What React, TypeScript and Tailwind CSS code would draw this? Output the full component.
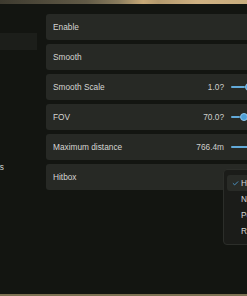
import { Check } from "lucide-react";

const font = { fontFamily: '"Liberation Sans", Arial, sans-serif' };

type Row = { label: string; value?: string; fill?: number };

const ROWS: Row[] = [
  { label: "Enable" },
  { label: "Smooth" },
  { label: "Smooth Scale", value: "1.0?", fill: 14 },
  { label: "FOV", value: "70.0?", fill: 9 },
  { label: "Maximum distance", value: "766.4m", fill: 24 },
];

function Slider({ fill }: { fill: number }) {
  return (
    <div className="relative flex h-[8px] w-[38px] items-center">
      <div className="h-[2px] w-full rounded-full bg-[#2e302c]" />
      <div className="absolute left-0 h-[2px] rounded-full bg-[#62a9d8]" style={{ width: fill }} />
      <div
        className="absolute top-0 h-[8px] w-[8px] rounded-full border border-[#8cc4ea] bg-[#4f9fd6]"
        style={{ left: fill }}
      />
    </div>
  );
}

function Card({ row }: { row: Row }) {
  return (
    <div className="flex h-[26px] w-[230px] items-center rounded-[3px] bg-[#272925] pl-[7px] pr-[7px]">
      <span className="text-[8.3px] text-[#d6d6d3]">{row.label}</span>
      {row.value && (
        <div className="ml-auto flex items-center gap-[7px]">
          <span className="text-[8.3px] text-[#cfcfcc]">{row.value}</span>
          <Slider fill={row.fill ?? 0} />
        </div>
      )}
    </div>
  );
}

const HITBOXES = ["Head", "Neck", "Pelvis", "Random"];

export default function App() {
  return (
    <div className="flex h-[296px] w-[247px] flex-col overflow-hidden bg-[#131511]" style={font}>
      <div className="h-[4px] w-full bg-[linear-gradient(90deg,#3d3a2f_0%,#625b47_35%,#8a7d5e_48%,#c7a977_58%,#b49a6e_64%,#cfb182_80%,#c9ad7e_100%)]" />

      <div className="flex flex-1">
        {/* Sidebar */}
        <div className="flex w-[37px] shrink-0 flex-col pt-[29px]">
          <div className="h-[17px] w-full bg-[#1c1e1a]" />
          <div className="mt-[111px] flex h-[12px] w-[4px] items-center justify-end overflow-hidden whitespace-nowrap text-[8.3px] text-[#cfcfcc]">
            Visuals
          </div>
        </div>

        {/* Settings */}
        <div className="ml-[9px] flex flex-col gap-[4px] pt-[10px]">
          {ROWS.map((row) => (
            <Card key={row.label} row={row} />
          ))}
          <div className="relative flex h-[26px] w-[230px] items-center rounded-[3px] bg-[#272925] pl-[7px]">
            <span className="text-[8.3px] text-[#d6d6d3]">Hitbox</span>
            <div className="absolute left-[177px] top-[5px] z-10 w-[64px] rounded-[4px] border border-[#2c2e2a] bg-[#1b1c19] px-[3px] py-[5px]">
              {HITBOXES.map((h, i) => (
                <div
                  key={h}
                  className={
                    "flex h-[16px] items-center rounded-[3px] pl-[5px] text-[8.3px] text-[#d6d6d3] " +
                    (i === 0 ? "bg-[#292b27]" : "")
                  }
                >
                  <span className="flex w-[9px] items-center">
                    {i === 0 && <Check size={7} strokeWidth={3} className="text-[#4f9fd6]" />}
                  </span>
                  {h}
                </div>
              ))}
            </div>
          </div>
        </div>
      </div>

      <div className="h-[2px] w-full bg-[#7d7253]" />
    </div>
  );
}
